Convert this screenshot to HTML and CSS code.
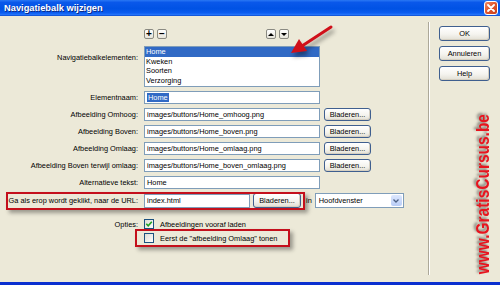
FILE: index.html
```html
<!DOCTYPE html>
<html lang="nl">
<head>
    <meta charset="UTF-8">
    <title>Navigatiebalk wijzigen</title>
    <link rel="stylesheet" href="styles.css">
</head>
<body>
    <div class="window">
        <div class="titlebar">
            <span class="title">Navigatiebalk wijzigen</span>
            <span class="close">
                <svg width="8" height="8" viewBox="0 0 8 8"><path d="M1 1L7 7M7 1L1 7" stroke="#fff" stroke-width="1.8" stroke-linecap="round"/></svg>
            </span>
        </div>

        <div class="client">
            <div class="form">
                <div class="label"></div>
                <div class="tools">
                    <div class="group">
                        <span class="tb">+</span>
                        <span class="tb">&minus;</span>
                    </div>
                    <div class="group">
                        <span class="tb"><i class="tri up"></i></span>
                        <span class="tb"><i class="tri down"></i></span>
                    </div>
                </div>

                <div class="label list-label">Navigatiebalkelementen:</div>
                <div class="listbox">
                    <div class="item selected">Home</div>
                    <div class="item">Kweken</div>
                    <div class="item">Soorten</div>
                    <div class="item">Verzorging</div>
                </div>

                <div class="label">Elementnaam:</div>
                <div class="field"><div class="input wide"><span class="hl">Home</span></div></div>

                <div class="label">Afbeelding Omhoog:</div>
                <div class="field"><div class="input wide">images/buttons/Home_omhoog.png</div><div class="btn small">Bladeren...</div></div>

                <div class="label">Afbeelding Boven:</div>
                <div class="field"><div class="input wide">images/buttons/Home_boven.png</div><div class="btn small">Bladeren...</div></div>

                <div class="label">Afbeelding Omlaag:</div>
                <div class="field"><div class="input wide">images/buttons/Home_omlaag.png</div><div class="btn small">Bladeren...</div></div>

                <div class="label">Afbeelding Boven terwijl omlaag:</div>
                <div class="field"><div class="input wide">images/buttons/Home_boven_omlaag.png</div><div class="btn small">Bladeren...</div></div>

                <div class="label">Alternatieve tekst:</div>
                <div class="field"><div class="input wide">Home</div></div>

                <div class="label">Ga als erop wordt geklikt, naar de URL:</div>
                <div class="field url">
                    <div class="input short">index.html</div>
                    <div class="btn small url-btn">Bladeren...</div>
                    <span class="in">in</span>
                    <div class="select">
                        <span>Hoofdvenster</span>
                        <span class="drop"><svg width="6" height="4" viewBox="0 0 6 4"><path d="M0.5 0.5L3 3L5.5 0.5" fill="none" stroke="#4d6185" stroke-width="1.3"/></svg></span>
                    </div>
                </div>

                <div class="label opt-label">Opties:</div>
                <div class="field check-row opt-first">
                    <span class="checkbox">
                        <svg width="8" height="8" viewBox="0 0 8 8"><path d="M1.3 3.8L3.2 5.8L6.8 1.8" fill="none" stroke="#21a121" stroke-width="1.6"/></svg>
                    </span>
                    <span>Afbeeldingen vooraf laden</span>
                </div>

                <div class="label"></div>
                <div class="field check-row">
                    <span class="checkbox"></span>
                    <span>Eerst de "afbeelding Omlaag" tonen</span>
                </div>
            </div>

            <div class="divider"></div>

            <div class="actions">
                <div class="btn big">OK</div>
                <div class="btn big">Annuleren</div>
                <div class="btn big">Help</div>
            </div>
        </div>

        <div class="bottom-border"></div>

        <!-- annotations drawn over the dialog -->
        <div class="mark mark-url"></div>
        <div class="mark mark-check"></div>
        <svg class="arrow" width="65" height="47" viewBox="0 0 65 47">
            <line x1="51" y1="9" x2="22" y2="28" stroke="#d0101a" stroke-width="3" stroke-linecap="round"/>
            <polygon points="11,35 27,33 19,21" fill="#d0101a"/>
        </svg>
        <div class="watermark">www.GratisCursus.be</div>
    </div>
</body>
</html>
```

FILE: styles.css
```css
*{
    box-sizing: border-box;
}

body{
    margin: 0;
    width: 500px;
    height: 285px;
    overflow: hidden;
    background-color: #ECE9D8;
    color: #000;
    font-family: "Liberation Sans", Arial, sans-serif;
    font-size: 7.4px;
}

.window{
    position: relative;
    height: 285px;
    display: flex;
    flex-direction: column;
}

.titlebar{
    height: 16px;
    flex: none;
    display: flex;
    align-items: center;
    justify-content: space-between;
    padding: 0 2px 0 4px;
    background: linear-gradient(#2a78f4 0%, #0a58ea 15%, #0052e4 55%, #0a5cf0 80%, #2474fa 92%, #0846c8 100%);
}

.title{
    color: #fff;
    font-weight: bold;
    font-size: 9.3px;
    text-shadow: 1px 1px 0 #0b2a86;
}

.close{
    width: 14px;
    height: 14px;
    display: flex;
    align-items: center;
    justify-content: center;
    border: 1px solid #fff;
    border-radius: 3px;
    background: linear-gradient(135deg, #f08a64, #e0542c 50%, #c8401c);
}

.client{
    flex: 1;
    display: flex;
}

.form{
    width: 428px;
    display: grid;
    grid-template-columns: 130px max-content;
    column-gap: 6px;
    row-gap: 4px;
    padding: 13px 0 0 8px;
    align-content: start;
    align-items: center;
}

.label{
    text-align: right;
    white-space: nowrap;
}

.list-label{
    align-self: start;
    margin-top: 7px;
}

.tools{
    width: 145px;
    height: 10px;
    margin-bottom: 3px;
    display: flex;
    justify-content: space-between;
}

.group{
    display: flex;
    gap: 3px;
}

.tb{
    width: 10px;
    height: 10px;
    display: flex;
    align-items: center;
    justify-content: center;
    border: 1px solid #8a8a82;
    border-radius: 2px;
    background: linear-gradient(#fff, #e6e4da);
    font-weight: bold;
    font-size: 10px;
    line-height: 1;
}

.tri{
    width: 0;
    height: 0;
    border-left: 3px solid transparent;
    border-right: 3px solid transparent;
}

.tri.up{
    border-bottom: 3px solid #000;
}

.tri.down{
    border-top: 3px solid #000;
}

.listbox{
    width: 176px;
    height: 41px;
    border: 1px solid #7F9DB9;
    background: #fff;
}

.item{
    height: 9.6px;
    line-height: 9.6px;
    padding-left: 1px;
}

.item.selected{
    background: #316AC5;
    color: #fff;
}

.field{
    display: flex;
    align-items: center;
    gap: 4px;
    height: 13px;
}

.input{
    height: 13px;
    line-height: 11px;
    padding-left: 2px;
    border: 1px solid #7F9DB9;
    background: #fff;
    white-space: nowrap;
    overflow: hidden;
}

.input.wide{
    width: 176px;
}

.input.short{
    width: 106px;
}

.hl{
    background: #316AC5;
    color: #fff;
    padding: 0 1px;
}

.btn{
    display: flex;
    align-items: center;
    justify-content: center;
    border: 1px solid #3f5f8f;
    border-radius: 3px;
    background: linear-gradient(#fff, #f5f4ef 55%, #e2dfd4);
    box-shadow: inset -1px -1px 0 #d6d0c2;
}

.btn.small{
    width: 47px;
    height: 13px;
}

.url{
    height: 15px;
    gap: 3px;
}

.url .input{
    height: 14px;
}

.url-btn.small{
    width: 48px;
    height: 15px;
}

.in{
    margin-left: 2px;
}

.select{
    width: 89px;
    height: 15px;
    display: flex;
    align-items: center;
    justify-content: space-between;
    padding: 1px 1px 1px 3px;
    border: 1px solid #7F9DB9;
    background: #fff;
}

.drop{
    width: 11px;
    height: 11px;
    display: flex;
    align-items: center;
    justify-content: center;
    border-radius: 2px;
    background: linear-gradient(#dce7fd, #b9cdf7);
}

.opt-label,
.opt-first{
    margin-top: 7px;
}

.check-row{
    gap: 6px;
    height: 10px;
}

.checkbox{
    width: 10px;
    height: 10px;
    display: flex;
    align-items: center;
    justify-content: center;
    border: 1px solid #1C5180;
    background: linear-gradient(135deg, #dcdcd4, #fff);
}

.divider{
    width: 2px;
    margin: 6px 0 7px;
    border-left: 1px solid #ACA899;
    border-right: 1px solid #fff;
}

.actions{
    padding: 10px 0 0 9px;
    display: flex;
    flex-direction: column;
    gap: 5px;
}

.btn.big{
    width: 51px;
    height: 15px;
}

.bottom-border{
    height: 3px;
    flex: none;
    background: #0a2fd0;
}

.mark{
    position: absolute;
    border: 2px solid #c4101c;
    box-shadow: 3px 3px 4px rgba(0, 0, 0, 0.35);
}

.mark-url{
    left: 6px;
    top: 192px;
    width: 299px;
    height: 18px;
}

.mark-check{
    left: 135px;
    top: 229px;
    width: 155px;
    height: 18px;
}

.arrow{
    position: absolute;
    left: 280px;
    top: 18px;
    filter: drop-shadow(2px 4px 2px rgba(0, 0, 0, 0.4));
}

.watermark{
    position: absolute;
    left: 474px;
    top: 101px;
    writing-mode: vertical-rl;
    transform: rotate(180deg) scaleY(0.86);
    font-size: 18px;
    line-height: 18px;
    font-weight: bold;
    color: #e8141e;
    text-shadow: 2px -2px 3px rgba(40, 40, 40, 0.6);
    white-space: nowrap;
}
```
